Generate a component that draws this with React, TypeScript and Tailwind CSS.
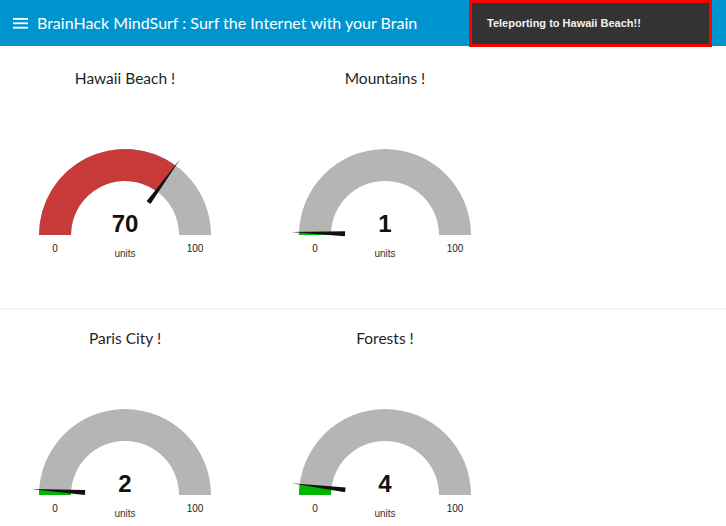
import React from "react";

type Gauge = {
  title: string;
  value: number;
};

const rows: Gauge[][] = [
  [
    { title: "Hawaii Beach !", value: 70 },
    { title: "Mountains !", value: 1 },
  ],
  [
    { title: "Paris City !", value: 2 },
    { title: "Forests !", value: 4 },
  ],
];

const CX = 125;
const CY = 147;
const R_OUT = 86;
const R_IN = 54;

function pt(r: number, deg: number) {
  const a = (deg * Math.PI) / 180;
  return [CX + r * Math.cos(a), CY - r * Math.sin(a)];
}

function arc(from: number, to: number) {
  const [x1, y1] = pt(R_OUT, from);
  const [x2, y2] = pt(R_OUT, to);
  const [x3, y3] = pt(R_IN, to);
  const [x4, y4] = pt(R_IN, from);
  return `M${x1} ${y1} A${R_OUT} ${R_OUT} 0 0 1 ${x2} ${y2} L${x3} ${y3} A${R_IN} ${R_IN} 0 0 0 ${x4} ${y4} Z`;
}

function needle(deg: number) {
  const a = (deg * Math.PI) / 180;
  const [bx, by] = pt(40, deg);
  const [tx, ty] = pt(94, deg);
  // perpendicular for the wide end
  const px = Math.sin(a) * 2.4;
  const py = Math.cos(a) * 2.4;
  return `${bx + px},${by + py} ${bx - px},${by - py} ${tx},${ty}`;
}

function GaugeCell({ g }: { g: Gauge }) {
  const angle = 180 - (g.value / 100) * 180;
  const color = g.value >= 66 ? "#c83a3a" : g.value >= 33 ? "#e6e600" : "#00b500";
  return (
    <div className="w-[250px] flex flex-col items-center">
      <div className="h-[20px] leading-[20px] text-[15.5px] text-[#1f1f1f] font-['Lato',sans-serif]">
        {g.title}
      </div>
      <svg width="250" height="176" viewBox="0 0 250 176">
        <path d={arc(180, 0)} fill="#b5b5b5" />
        <path d={arc(180, angle)} fill={color} />
        <polygon points={needle(angle)} fill="#111" />
        <text
          x={CX}
          y={144}
          textAnchor="middle"
          fontFamily="Liberation Sans, Arial, sans-serif"
          fontWeight="bold"
          fontSize="24"
          fill="#111"
        >
          {g.value}
        </text>
        <text x={CX - 70} y={164} textAnchor="middle" fontFamily="Liberation Sans, Arial, sans-serif" fontSize="10" fill="#222">
          0
        </text>
        <text x={CX + 70} y={164} textAnchor="middle" fontFamily="Liberation Sans, Arial, sans-serif" fontSize="10" fill="#222">
          100
        </text>
        <text x={CX} y={169} textAnchor="middle" fontFamily="Liberation Sans, Arial, sans-serif" fontSize="10" fill="#333">
          units
        </text>
      </svg>
    </div>
  );
}

export default function App() {
  return (
    <div className="w-[726px] h-[526px] bg-white relative overflow-hidden">
      {/* top bar */}
      <header className="h-[46px] bg-[#0094ce] flex items-center pl-[13px] gap-[9px]">
        <svg width="15" height="12" viewBox="0 0 15 12">
          <rect x="0" y="1" width="15" height="1.8" fill="#fff" />
          <rect x="0" y="5.4" width="15" height="1.8" fill="#fff" />
          <rect x="0" y="9.8" width="15" height="1.8" fill="#fff" />
        </svg>
        <span className="text-white text-[16px] font-['Lato',sans-serif]">
          BrainHack MindSurf : Surf the Internet with your Brain
        </span>
      </header>

      {/* toast */}
      <div className="absolute top-0 left-[469px] w-[243px] h-[47px] bg-[#333333] border-[3px] border-[#ff0000] flex items-center pl-[15px]">
        <span className="text-[#f2f2f2] text-[11px] font-bold font-['Liberation_Sans',Arial,sans-serif]">
          Teleporting to Hawaii Beach!!
        </span>
      </div>

      <div className="h-px bg-[#f6f6f6]" />

      <div className="h-[261px] pt-[21px] flex gap-[10px]">
        {rows[0].map((g) => (
          <GaugeCell key={g.title} g={g} />
        ))}
      </div>
      <div className="h-[2px] bg-[#f3f3f3]" />
      <div className="pt-[18px] flex gap-[10px]">
        {rows[1].map((g) => (
          <GaugeCell key={g.title} g={g} />
        ))}
      </div>
    </div>
  );
}
